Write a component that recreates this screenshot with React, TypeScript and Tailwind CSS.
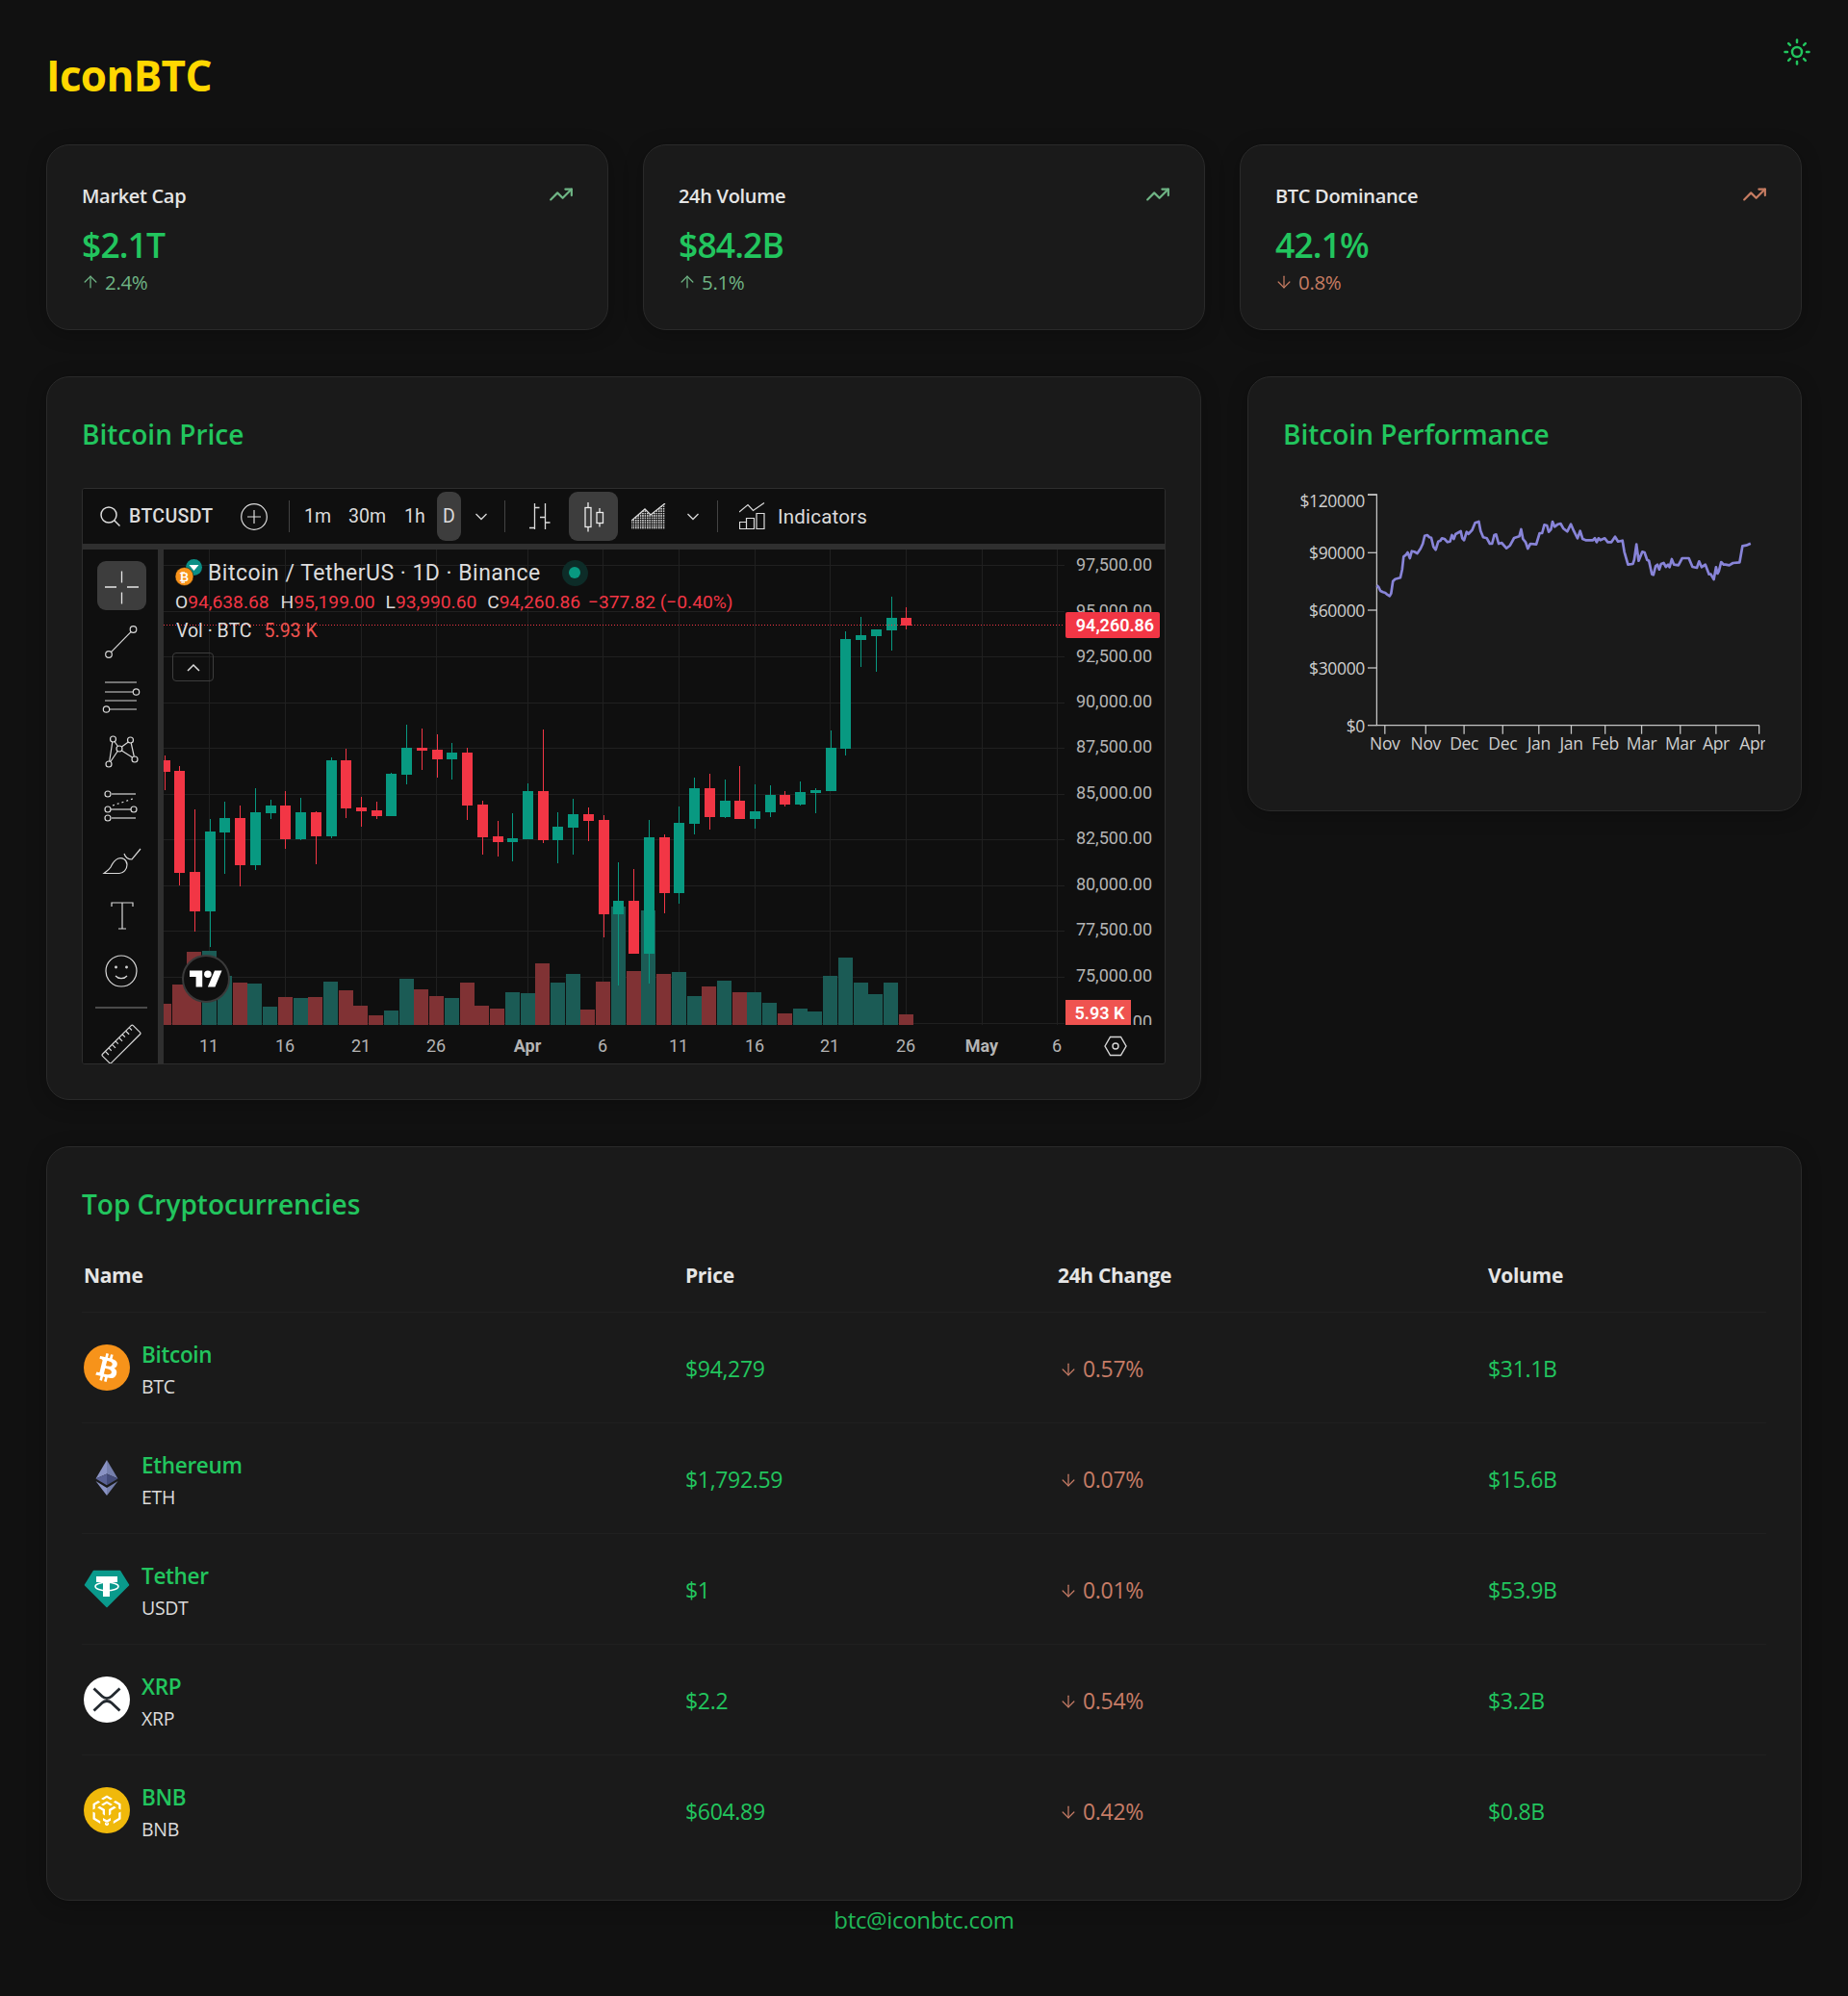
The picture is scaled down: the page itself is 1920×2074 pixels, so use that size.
import React from "react";
import { TrendingUp, ArrowUp, ArrowDown, Sun } from "lucide-react";

const G = "#089981";
const R = "#f23645";
const VG = "#1b5b55";
const VR = "#803234";
// wickTop, bodyTop, bodyBottom, wickBottom, up(1)/down(0), volumeTop (page-y values; pane origin y = 571)
const candles: [number, number, number, number, number, number][] = [
  [785, 790, 802, 821, 0, 1043], [796, 801, 907, 920, 0, 1023], [841, 906, 947, 968, 0, 989], [851, 864, 947, 984, 1, 988],
  [833, 850, 865, 908, 1, 1014], [837, 850, 899, 921, 0, 1021], [819, 844, 899, 904, 1, 1022], [831, 837, 845, 851, 1, 1046],
  [822, 837, 872, 882, 0, 1036], [829, 844, 872, 873, 1, 1037], [843, 844, 869, 898, 0, 1036], [787, 790, 869, 871, 1, 1020],
  [778, 790, 840, 850, 0, 1029], [828, 839, 843, 859, 0, 1045], [833, 842, 848, 851, 0, 1055], [803, 804, 848, 848, 1, 1050],
  [753, 777, 805, 815, 1, 1017], [757, 777, 780, 800, 0, 1028], [763, 779, 789, 808, 0, 1035], [772, 782, 789, 810, 1, 1037],
  [777, 782, 837, 852, 0, 1021], [832, 836, 870, 888, 0, 1045], [853, 869, 875, 890, 0, 1048], [845, 871, 875, 895, 1, 1031],
  [814, 822, 872, 872, 1, 1032], [758, 822, 873, 876, 0, 1001], [844, 859, 873, 897, 1, 1021], [830, 846, 860, 888, 1, 1012],
  [839, 846, 853, 874, 0, 1049], [847, 852, 950, 974, 0, 1020], [896, 936, 950, 1024, 1, 942], [903, 936, 991, 991, 0, 1009],
  [852, 870, 991, 1022, 1, 946], [867, 870, 928, 949, 0, 1012], [838, 855, 928, 939, 1, 1010], [808, 819, 856, 867, 1, 1035],
  [804, 819, 849, 862, 0, 1025], [810, 832, 849, 850, 1, 1019], [796, 832, 851, 851, 0, 1031], [815, 843, 851, 861, 1, 1031],
  [816, 826, 844, 849, 1, 1042], [822, 826, 836, 838, 0, 1053], [812, 823, 836, 837, 1, 1048], [819, 821, 824, 845, 1, 1051],
  [759, 777, 822, 822, 1, 1014], [656, 664, 778, 785, 1, 995], [641, 660, 665, 693, 1, 1021], [654, 654, 661, 698, 1, 1033],
  [620, 642, 655, 676, 1, 1021], [631, 642, 650, 654, 0, 1054],
];
const hGrid = [587, 635, 682, 730, 777, 825, 872, 920, 967, 1015, 1063];
const vGrid = [217, 296, 375, 453.5, 548, 626, 705, 784, 862.5, 941.5, 1020, 1098];
const priceLabels: [string, number][] = [
  ["97,500.00", 587], ["95,000.00", 635], ["92,500.00", 682], ["90,000.00", 729], ["87,500.00", 776], ["85,000.00", 824],
  ["82,500.00", 871], ["80,000.00", 919], ["77,500.00", 966], ["75,000.00", 1014], ["72,500.00", 1062],
];
const timeLabels: [string, number][] = [
  ["11", 217], ["16", 296], ["21", 375], ["26", 453], ["Apr", 548], ["6", 626], ["11", 705], ["16", 784], ["21", 862], ["26", 941], ["May", 1020], ["6", 1098],
];

const PaneSvg = () => (
  <svg width={1040} height={534} viewBox="170 571 1040 534" className="block">
    <defs>
      <clipPath id="plot"><rect x={170} y={571} width={936} height={494} /></clipPath>
      <clipPath id="axis"><rect x={1106} y={571} width={104} height={494} /></clipPath>
    </defs>
    {hGrid.map((y) => (
      <line key={y} x1={170} x2={1106} y1={y} y2={y} stroke="#202020" strokeWidth={1} shapeRendering="crispEdges" />
    ))}
    {vGrid.map((x) => (
      <line key={x} x1={x} x2={x} y1={571} y2={1065} stroke="#202020" strokeWidth={1} shapeRendering="crispEdges" />
    ))}
    <g clipPath="url(#plot)" shapeRendering="crispEdges">
      {candles.map((c, i) => {
        const x = 170.5 + 15.73 * i;
        return <rect key={i} x={x - 7.5} width={15} y={c[5]} height={1065 - c[5]} fill={c[4] ? VG : VR} />;
      })}
      {candles.map((c, i) => {
        const x = Math.round(170.5 + 15.73 * i);
        const col = c[4] ? G : R;
        return (
          <g key={i} fill={col}>
            <rect x={x} width={1} y={c[0]} height={c[3] - c[0]} />
            <rect x={x - 5} width={11} y={c[1]} height={c[2] - c[1]} />
          </g>
        );
      })}
      <line x1={170} x2={1106} y1={649.5} y2={649.5} stroke={R} strokeWidth={1} strokeDasharray="1 2" />
    </g>
    <g clipPath="url(#axis)" fill="#b4b4b4" fontSize={18}>
      {priceLabels.map(([t, y]) => (
        <text key={t} x={1197} y={y + 6} textAnchor="end">{t}</text>
      ))}
    </g>
    <g fill="#b4b4b4" fontSize={18} textAnchor="middle">
      {timeLabels.map(([t, x], i) => (
        <text key={i} x={x} y={1093} fontWeight={t === "Apr" || t === "May" ? 700 : 400}>{t}</text>
      ))}
    </g>
    <g stroke="#d6d6d6" strokeWidth={1.4} fill="none">
      <polygon points="1148,1087 1153.5,1077.5 1164.5,1077.5 1170,1087 1164.5,1096.5 1153.5,1096.5" />
      <circle cx={1159} cy={1087} r={3} />
    </g>
  </svg>
);

const Ico = ({ cy, children }: { cy: number; children: React.ReactNode }) => (
  <div className="flex h-[57px] w-[52px] items-center justify-center">
    <svg width={52} height={52} viewBox={`99 ${cy - 26} 52 52`} fill="none" stroke="#d8d8d8" strokeWidth={1.2}>
      {children}
    </svg>
  </div>
);

const LeftBar = () => (
  <div className="flex w-[78px] shrink-0 flex-col items-center bg-[#0f0f0f] pl-[1px] pt-[10px]">
    <div className="relative flex h-[57px] w-[52px] items-center justify-center">
      <div className="absolute left-[1px] top-[2px] h-[51px] w-[51px] rounded-[9px] bg-[#3d3d3d]" />
      <svg className="relative" width={52} height={52} viewBox="99 583 52 52" fill="none" stroke="#e6e6e6" strokeWidth={1.3}>
        <path d="M125.5 592.5v12M125.5 614.5v12M108 609h12M131 609h12" />
      </svg>
    </div>
    <Ico cy={666}>
      <circle cx={137.5} cy={653} r={3.3} /><circle cx={112} cy={679} r={3.3} /><path d="M135.2 655.4 114.4 676.6" />
    </Ico>
    <Ico cy={723}>
      <path d="M108 708h33M108 718h29M108 727h33M113 736h28" /><circle cx={140.5} cy={718} r={3.2} /><circle cx={109.5} cy={736} r={3.2} />
    </Ico>
    <Ico cy={780}>
      <circle cx={116.5} cy={767} r={3} /><circle cx={134.5} cy={768} r={3} /><circle cx={123} cy={777} r={3} /><circle cx={112} cy={793} r={3} /><circle cx={139} cy={788} r={3} />
      <path d="M115.8 770 112.7 790M118 769.5 121.5 774.5M125.5 775 132.3 770M113.8 790.5 121.2 779.5M125.5 779 136.5 786M135.2 771 138.3 785" />
    </Ico>
    <Ico cy={838}>
      <circle cx={111} cy={825} r={3} /><path d="M115 825h25" /><circle cx={111} cy={841} r={3} /><circle cx={138} cy={841} r={3} /><path d="M114 841h21" />
      <circle cx={111} cy={850} r={3} /><path d="M115 850h25" /><path d="M116 837 137 830" strokeDasharray="2 3" />
    </Ico>
    <Ico cy={895}>
      <path d="M107 907.5h16c4 0 8-4 8-9 0-5-5-8-9-6.500-5 2-6 5-8 9-2 3-4 4-7 6.500z" /><path d="M128 887c1 3 4 6 8 6l9-11" />
    </Ico>
    <Ico cy={951}>
      <path d="M115 941v-4h22v4M126 937v27M122 964h8" />
    </Ico>
    <Ico cy={1008}>
      <circle cx={125} cy={1008} r={16} /><circle cx={119.5} cy={1004} r={0.8} fill="#d8d8d8" /><circle cx={130.5} cy={1004} r={0.8} fill="#d8d8d8" /><path d="M119 1013c3 3.500 9 3.500 12 0" />
    </Ico>
    <div className="mt-[9px] h-[2px] w-[54px] bg-[#4a4a4a]" />
    <div className="mt-[11px]">
      <svg width={52} height={52} viewBox="99 1058 52 52" fill="none" stroke="#d8d8d8" strokeWidth={1.2}>
        <g transform="rotate(-45 125 1084)">
          <rect x={102.500} y={1077.500} width={45} height={13} rx={1.500} />
          <path d="M108 1077.500v5M113 1077.500v4M118 1077.500v5M123 1077.500v4M128 1077.500v5M133 1077.500v4M138 1077.500v5M143 1077.500v4" />
        </g>
      </svg>
    </div>
  </div>
);

const Chev = ({ cls }: { cls: string }) => (
  <svg className={cls} width={12} height={8} viewBox="0 0 12 8" fill="none" stroke="#d8d8d8" strokeWidth={1.3}><path d="M0.500 1 6 6.500 11.500 1" /></svg>
);
const Sep = ({ cls }: { cls: string }) => <div className={`h-[33px] w-[1px] bg-[#434343] ${cls}`} />;

const TopBar = () => (
  <div className="flex h-[57px] shrink-0 items-center bg-[#0f0f0f] text-[19.5px] text-[#dcdcdc]">
    <svg className="ml-[18px]" width={21} height={21} viewBox="0 0 21 21" fill="none" stroke="#dcdcdc" strokeWidth={1.5}>
      <circle cx={9} cy={9} r={8} /><path d="M14.500 14.500 20.500 20.500" />
    </svg>
    <span className="ml-[9px] mt-[1px] w-[87px] font-medium tracking-[0.35px]">BTCUSDT</span>
    <svg className="ml-[29px]" width={28} height={28} viewBox="0 0 28 28" fill="none" stroke="#dcdcdc" strokeWidth={1.2}>
      <circle cx={14} cy={14} r={13.300} /><path d="M14 7v14M7 14h14" />
    </svg>
    <Sep cls="ml-[22px]" />
    <span className="ml-[15px] mt-[1px] w-[28px]">1m</span>
    <span className="ml-[18px] mt-[1px] w-[40px]">30m</span>
    <span className="ml-[18px] mt-[1px] w-[23px]">1h</span>
    <div className="ml-[11px] flex h-[51px] w-[25px] items-center justify-center rounded-[9px] bg-[#3d3d3d]">D</div>
    <Chev cls="ml-[15px]" />
    <Sep cls="ml-[18px]" />
    <svg className="ml-[25px]" width={22} height={28} viewBox="550 524 22 28" fill="none" stroke="#dcdcdc" strokeWidth={1.3}>
      <path d="M555.500 524v27M566.500 524v27M555.500 528.500h5M550 549.500h5.500M561 538.500h5.500M566.500 544h5" />
    </svg>
    <div className="ml-[19px] flex h-[51px] w-[51px] items-center justify-center rounded-[9px] bg-[#3d3d3d]">
      <svg width={22} height={32} viewBox="607 521 22 32" fill="none" stroke="#ececec" strokeWidth={1.3}>
        <rect x={609} y={527.500} width={6} height={20} /><path d="M612 522v5.500M612 547.500v5" /><rect x={621} y={532.500} width={6.500} height={11} /><path d="M624 528v4.500M624 543.500v4" />
      </svg>
    </div>
    <svg className="ml-[14px]" width={36} height={27} viewBox="656 523 36 27">
      <defs>
        <pattern id="dots" width={2.4} height={2.4} patternUnits="userSpaceOnUse"><rect width={1.5} height={1.5} fill="#e4e4e4" /></pattern>
      </defs>
      <path d="M656 541 670 529 676 535 691 523V550H656Z" fill="url(#dots)" />
      <path d="M656 541 670 529 676 535 691 523" fill="none" stroke="#dcdcdc" strokeWidth={1.3} />
    </svg>
    <Chev cls="ml-[22px]" />
    <Sep cls="ml-[19px]" />
    <svg className="ml-[22px]" width={27} height={29} viewBox="768 523 27 29" fill="none" stroke="#dcdcdc" strokeWidth={1.2}>
      <path d="M768 533 777 525.500 782.500 531.500 794 523.500" /><path d="M768.500 543.500h7v7h-7zM775.500 539.500h8v11h-8zM786 534.500h8v16h-8z" />
    </svg>
    <span className="ml-[13px] mt-[1px] text-[20.5px] tracking-[0.2px]">Indicators</span>
  </div>
);

const LegendIcons = () => (
  <svg width={30} height={28} viewBox="0 0 30 28">
    <circle cx={19.500} cy={8.500} r={8.500} fill="#0b8f86" />
    <path d="M14.500 6h10l-5 6z" fill="#ffffff" />
    <circle cx={9.500} cy={18} r={9.500} fill="#f7931a" stroke="#0f0f0f" strokeWidth={0.5} />
    <text x={9.500} y={22.500} textAnchor="middle" fontSize={12} fontWeight={700} fill="#ffffff">₿</text>
  </svg>
);

const Tv = () => (
  <div className="flex h-[599px] w-[1126px] flex-col overflow-hidden rounded-[3px] border border-[#2e2e2e] bg-[#0f0f0f] font-['Roboto',sans-serif] tracking-normal">
    <TopBar />
    <div className="h-[6px] shrink-0 bg-[#2f2f2f]" />
    <div className="flex flex-1">
      <LeftBar />
      <div className="w-[6px] shrink-0 bg-[#2f2f2f]" />
      <div className="relative w-[1040px]">
        <PaneSvg />
        <div className="absolute left-[12px] top-[10px] flex h-[28px] items-center text-[23px] tracking-[0.48px] text-[#dcdcdc]">
          <LegendIcons />
          <span className="ml-[4px] mt-[2px] whitespace-pre">Bitcoin / TetherUS · 1D · Binance</span>
          <span className="ml-[22px] flex h-[27px] w-[27px] items-center justify-center rounded-full bg-[#0d2c28]">
            <span className="h-[12px] w-[12px] rounded-full bg-[#089981]" />
          </span>
        </div>
        <div className="absolute left-[12px] top-[44px] flex h-[22px] items-center whitespace-pre text-[19.2px] text-[#f23645]">
          <span className="text-[#dcdcdc]">O</span>94,638.68
          <span className="ml-[12px] text-[#dcdcdc]">H</span>95,199.00
          <span className="ml-[11px] text-[#dcdcdc]">L</span>93,990.60
          <span className="ml-[11px] text-[#dcdcdc]">C</span>94,260.86
          <span className="ml-[8px]">−377.82 (−0.40%)</span>
        </div>
        <div className="absolute left-[13px] top-[74px] flex h-[22px] items-center whitespace-pre text-[19.5px] text-[#dcdcdc]">
          Vol · BTC<span className="ml-[13px] text-[#ef5350]">5.93 K</span>
        </div>
        <div className="absolute left-[9px] top-[107px] flex h-[30px] w-[43px] items-center justify-center rounded-[4px] border border-[#3d3d3d]">
          <svg width={14} height={9} viewBox="0 0 14 9" fill="none" stroke="#dcdcdc" strokeWidth={1.5}><path d="M1 8 7 2l6 6" /></svg>
        </div>
        <div className="absolute left-[937px] top-[65px] flex h-[27px] w-[98px] items-center justify-center rounded-[2px] bg-[#f23645] pl-[5px] text-[18px] font-semibold text-white">94,260.86</div>
        <div className="absolute left-[937px] top-[468px] flex h-[26px] w-[68px] items-center justify-center bg-[#ef5350] pl-[3px] text-[18px] font-semibold text-white">5.93 K</div>
        <div className="absolute left-[19px] top-[421px] flex h-[50px] w-[50px] items-center justify-center rounded-full border-[2.500px] border-[#3a3a3a] bg-[#0f0f0f]">
          <svg width={34} height={18} viewBox="0 4 36 18" fill="#ffffff">
            <path d="M14 22H7V11H0V4h14v18zM28 22h-8l7.500-18h8L28 22z" /><circle cx={20} cy={8} r={4} />
          </svg>
        </div>
      </div>
    </div>
  </div>
);

const perfRaw = [393,625,398,630,403,642,410,646,416,648,420,652,428,658,432,650,437,612,443,605,450,603,457,601,462,575,466,535,472,530,477,522,483,540,488,518,495,520,503,525,512,510,518,495,523,470,530,468,536,475,541,476,547,505,553,514,560,488,566,485,570,478,577,480,585,490,592,488,597,468,602,480,607,465,615,460,621,456,625,478,630,484,637,458,642,464,652,452,660,430,670,426,675,455,682,475,692,478,700,495,706,495,712,468,717,466,724,495,732,492,745,509,755,500,766,477,780,472,785,450,790,480,797,490,803,510,810,495,826,497,835,462,842,462,848,436,855,438,860,458,866,450,870,426,876,442,885,434,892,432,900,448,910,457,920,434,928,455,938,478,945,455,952,480,960,484,980,484,985,478,990,490,995,478,1000,484,1012,478,1020,490,1030,490,1040,473,1048,488,1060,485,1065,520,1075,560,1088,558,1092,545,1098,497,1104,548,1114,520,1120,522,1127,545,1132,548,1140,590,1144,592,1150,565,1155,560,1160,575,1165,558,1172,555,1178,567,1184,560,1188,568,1194,543,1200,560,1212,562,1222,540,1240,540,1250,567,1262,570,1268,550,1275,568,1285,560,1295,590,1300,590,1308,606,1314,568,1318,588,1322,580,1328,552,1335,560,1340,560,1350,562,1360,555,1378,553,1386,502,1396,500,1408,494];
const fx = (X: number) => 1280 + X / 2.613 - 1333;
const fy = (Y: number) => 400 + Y / 3 - 507;
const perfPts = perfRaw.reduce<string[]>((a, v, i) => {
  if (i % 2 === 0) a.push(`${fx(v).toFixed(1)},${fy(perfRaw[i + 1]).toFixed(1)}`);
  return a;
}, []).join(" ");
const yTicks: [string, number, number][] = [["$120000", 514, 527], ["$90000", 574.3, 581], ["$60000", 634, 641], ["$30000", 694, 701], ["$0", 753.7, 761]];
const xTicks = [415, 526, 630, 735, 833, 921, 1013, 1112, 1217, 1314, 1431];
const xNames = ["Nov", "Nov", "Dec", "Dec", "Jan", "Jan", "Feb", "Mar", "Mar", "Apr", "Apr"];

const PerfChart = () => (
  <svg width={501} height={299} viewBox="0 0 501 299" className="block">
    <g stroke="#c4c4c4" strokeWidth={1.3} fill="none">
      <path d={`M88 7H97.400V246.700H495`} />
      {yTicks.map(([, y]) => <line key={y} x1={88} x2={97.400} y1={y - 507} y2={y - 507} />)}
      {xTicks.map((X) => <line key={X} x1={fx(X)} x2={fx(X)} y1={246.700} y2={255.700} />)}
    </g>
    <polyline points={perfPts} fill="none" stroke="#8884d8" strokeWidth={2.700} strokeLinejoin="round" />
    <g fill="#cfcfcf" fontSize={17.5} letterSpacing={-0.35}>
      {yTicks.map(([t, , ty]) => <text key={t} x={85} y={ty - 507} textAnchor="end">{t}</text>)}
      {xTicks.map((X, i) => <text key={X} x={fx(i === 10 ? 1414 : X)} y={272} textAnchor="middle">{xNames[i]}</text>)}
    </g>
  </svg>
);

const cardCls = "rounded-3xl border border-[#2a2a2a] bg-[#1a1a1a] shadow-[0_4px_20px_rgba(0,0,0,0.25)]";

const stats = [
  { t: "Market Cap", v: "$2.1T", d: "2.4%", up: true, iconUp: true },
  { t: "24h Volume", v: "$84.2B", d: "5.1%", up: true, iconUp: true },
  { t: "BTC Dominance", v: "42.1%", d: "0.8%", up: false, iconUp: false },
];

const BtcLogo = () => (
  <svg width={48} height={48} viewBox="0 0 32 32">
    <circle cx={16} cy={16} r={16} fill="#f7931a" />
    <path fill="#ffffff" d="M23.189 14.02c.314-2.096-1.283-3.223-3.465-3.975l.708-2.84-1.728-.43-.69 2.765c-.454-.114-.92-.22-1.385-.326l.695-2.783L15.596 6l-.708 2.839c-.376-.086-.746-.17-1.104-.26l.002-.009-2.384-.595-.46 1.846s1.283.294 1.256.312c.7.175.826.638.805 1.006l-.806 3.235c.048.012.11.03.18.057l-.183-.045-1.13 4.532c-.086.212-.303.531-.793.41.018.025-1.256-.313-1.256-.313l-.858 1.978 2.25.561c.418.105.828.215 1.231.318l-.715 2.872 1.727.43.708-2.84c.472.127.93.245 1.378.357l-.706 2.828 1.728.43.715-2.866c2.948.558 5.164.333 6.097-2.333.752-2.146-.037-3.385-1.588-4.192 1.13-.26 1.98-1.003 2.207-2.538zm-3.95 5.538c-.533 2.147-4.148.986-5.32.695l.95-3.805c1.172.293 4.929.872 4.37 3.11zm.535-5.569c-.487 1.953-3.495.96-4.47.717l.86-3.45c.975.243 4.118.696 3.61 2.733z" />
  </svg>
);
const EthLogo = () => (
  <svg width={48} height={48} viewBox="0 0 48 48">
    <polygon points="24,5 12.500,24.500 24,19.500" fill="#8a93c4" />
    <polygon points="24,5 35.500,24.500 24,19.500" fill="#7680ad" />
    <polygon points="24,19.500 12.500,24.500 24,31.300" fill="#5a6295" />
    <polygon points="24,19.500 35.500,24.500 24,31.300" fill="#444c7a" />
    <polygon points="12.500,27 24,42 24,34" fill="#8a93c4" />
    <polygon points="35.500,27 24,42 24,34" fill="#7680ad" />
  </svg>
);
const UsdtLogo = () => (
  <svg width={48} height={48} viewBox="0 0 48 48">
    <polygon points="10.500,5.500 37.500,5.500 46.500,20 24,42.500 1.500,20" fill="#0a9a8c" stroke="#0a9a8c" strokeWidth={1.500} strokeLinejoin="round" />
    <path fill="#ffffff" d="M13 11h22v6h-8v15h-7V17h-7z" />
    <ellipse cx={24} cy={21.500} rx={12} ry={4.200} fill="none" stroke="#ffffff" strokeWidth={1.500} />
  </svg>
);
const XrpLogo = () => (
  <svg width={48} height={48} viewBox="0 0 48 48">
    <circle cx={24} cy={24} r={24} fill="#ffffff" />
    <path fill="none" stroke="#23292f" strokeWidth={2.800} d="M10.500 12.500 19 20.500c2.800 2.700 7.200 2.700 10 0l8.500-8M10.500 35.500 19 27.500c2.800-2.700 7.200-2.700 10 0l8.500 8" />
  </svg>
);
const BnbLogo = () => (
  <svg width={48} height={48} viewBox="0 0 48 48">
    <circle cx={24} cy={24} r={24} fill="#f0b90b" />
    <g fill="#ffffff">
      <path d="M24 8.500 30 12l-2.200 1.300L24 11l-3.800 2.300L18 12zM33 14l5.500 3.300v6.200l-2.300-1.300v-3.600l-5.400-3.200zM15 14l2.200 1.400-5.400 3.200v3.600l-2.300 1.300v-6.200zM24 14.500l6 3.500-2.200 1.300L24 17l-3.800 2.300L18 18z" />
      <path d="M16.500 19.800l5.500 3.300v6.300l-2.300-1.400v-3.600l-5.500-3.200zM31.500 19.800l2.300 1.400-5.500 3.200V28l-2.300 1.400v-6.300zM9.500 25.500l2.300 1.300v5.100l5.400 3.300v2.700l-7.700-4.600zM38.500 25.500v7.800l-7.700 4.600v-2.700l5.400-3.300v-5.100zM20 32l4 2.300 4-2.300v2.700l-4 2.300-4-2.300zM22 36.500l2 1.200 2-1.200V39l-2 1.300-2-1.300z" />
    </g>
  </svg>
);

const coins = [
  { n: "Bitcoin", s: "BTC", p: "$94,279", c: "0.57%", v: "$31.1B", L: BtcLogo },
  { n: "Ethereum", s: "ETH", p: "$1,792.59", c: "0.07%", v: "$15.6B", L: EthLogo },
  { n: "Tether", s: "USDT", p: "$1", c: "0.01%", v: "$53.9B", L: UsdtLogo },
  { n: "XRP", s: "XRP", p: "$2.2", c: "0.54%", v: "$3.2B", L: XrpLogo },
  { n: "BNB", s: "BNB", p: "$604.89", c: "0.42%", v: "$0.8B", L: BnbLogo },
];

const rowGrid = "grid grid-cols-[625px_387px_447px_1fr] items-center";

export default function App() {
  return (
    <div className="relative h-[2074px] bg-[#111111] px-12 pt-12 font-['Open_Sans',sans-serif] tracking-[-0.02em]">
      <header className="h-[102px]">
        <h1 className="text-[44px] font-bold leading-[60px] tracking-[-0.015em] text-[#ffd700]">IconBTC</h1>
      </header>
      <button className="absolute right-[38px] top-[39px] text-[#22c55e]"><Sun size={30} /></button>

      <section className="mb-12 grid grid-cols-3 gap-9">
        {stats.map((s) => (
          <div key={s.t} className={`${cardCls} h-[193px] p-9`}>
            <div className="flex h-[34px] items-start justify-between">
              <span className="text-[20px] font-semibold leading-[34px] text-[#e5e5e5]">{s.t}</span>
              <TrendingUp size={26} strokeWidth={2} className={`-mr-[1px] mt-[2px] ${s.iconUp ? "text-[#6fb585]" : "text-[#c67c62]"}`} />
            </div>
            <div className="mt-[8px] h-[51px] text-[35.5px] font-semibold leading-[50px] tracking-[-0.025em] text-[#22c55e]">{s.v}</div>
            <div className={`-ml-[1px] flex h-[26px] items-center text-[20.5px] ${s.up ? "text-[#6fb585]" : "text-[#c67c62]"}`}>
              {s.up ? <ArrowUp size={20} strokeWidth={1.5} /> : <ArrowDown size={20} strokeWidth={1.5} />}
              <span className="ml-[5px]">{s.d}</span>
            </div>
          </div>
        ))}
      </section>

      <section className="mb-12 flex items-start gap-12">
        <div className={`${cardCls} h-[752px] w-[1200px] p-9`}>
          <h2 className="mb-[33px] h-[46px] text-[28px] font-semibold leading-[46px] tracking-normal text-[#22c55e]">Bitcoin Price</h2>
          <Tv />
        </div>
        <div className={`${cardCls} h-[452px] w-[576px] p-9`}>
          <h2 className="mb-[33px] h-[46px] text-[28px] font-semibold leading-[46px] tracking-normal text-[#22c55e]">Bitcoin Performance</h2>
          <PerfChart />
        </div>
      </section>

      <section className={`${cardCls} h-[784px] p-9`}>
        <h2 className="h-[61px] text-[28px] font-semibold leading-[46px] tracking-normal text-[#22c55e]">Top Cryptocurrencies</h2>
        <div className={`${rowGrid} h-[75px] border-b border-[#202020] pl-[2px] text-[21px] font-bold text-[#e5e5e5]`}>
          <span>Name</span><span>Price</span><span>24h Change</span><span>Volume</span>
        </div>
        {coins.map((c, i) => (
          <div key={c.n} className={`${rowGrid} ${i < coins.length - 1 ? "h-[115px] border-b border-[#202020]" : "h-[114px]"} pl-[2px] text-[23px] text-[#22c55e]`}>
            <div className="flex items-center">
              <c.L />
              <div className="ml-[12px] mt-[6px]">
                <div className="text-[22.5px] font-semibold leading-[32px]">{c.n}</div>
                <div className="text-[19.5px] leading-[33px] text-[#dcdcdc]">{c.s}</div>
              </div>
            </div>
            <span className="mt-[3px]">{c.p}</span>
            <span className="mt-[3px] flex items-center text-[#c67c66]">
              <ArrowDown size={20} strokeWidth={1.5} className="ml-[1px]" />
              <span className="ml-[5px]">{c.c}</span>
            </span>
            <span className="mt-[3px]">{c.v}</span>
          </div>
        ))}
      </section>

      <footer className="mt-[2px] h-[36px] text-center text-[24px] leading-[36px] text-[#20b858]">btc@iconbtc.com</footer>
    </div>
  );
}
